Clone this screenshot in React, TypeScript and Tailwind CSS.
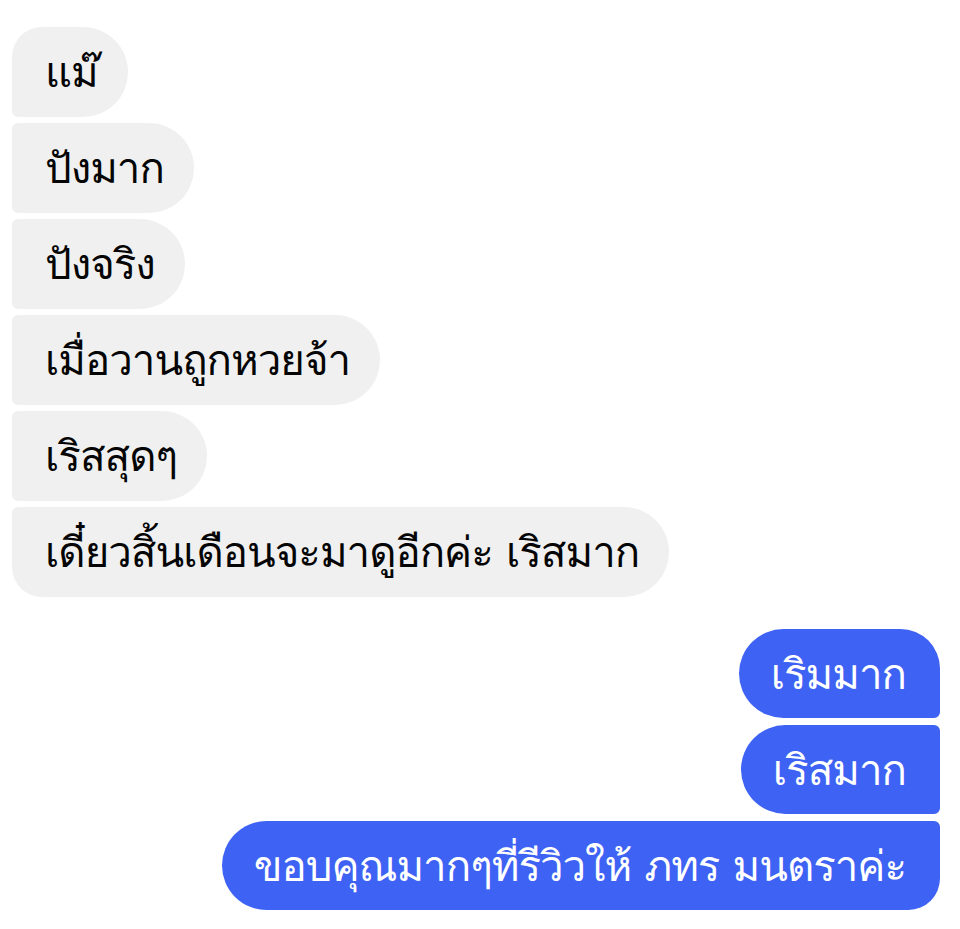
import React from "react";

type Msg = { text: string; corners: string };

const incoming: Msg[] = [
  { text: "แม๊", corners: "rounded-tl-[30px] rounded-bl-[6px] rounded-r-[45px]" },
  { text: "ปังมาก", corners: "rounded-l-[6px] rounded-r-[45px]" },
  { text: "ปังจริง", corners: "rounded-l-[6px] rounded-r-[45px]" },
  { text: "เมื่อวานถูกหวยจ้า", corners: "rounded-l-[6px] rounded-r-[45px]" },
  { text: "เริสสุดๆ", corners: "rounded-l-[6px] rounded-r-[45px]" },
  {
    text: "เดี๋ยวสิ้นเดือนจะมาดูอีกค่ะ เริสมาก",
    corners: "rounded-tl-[6px] rounded-bl-[30px] rounded-r-[45px]",
  },
];

const outgoing: Msg[] = [
  { text: "เริมมาก", corners: "rounded-l-[45px] rounded-tr-[40px] rounded-br-[6px]" },
  { text: "เริสมาก", corners: "rounded-l-[45px] rounded-r-[6px]" },
  { text: "ขอบคุณมากๆที่รีวิวให้ ภทร มนตราค่ะ", corners: "rounded-l-[45px] rounded-tr-[6px] rounded-br-[32px]" },
];

const font = {
  fontFamily: 'Loma, "Noto Sans Thai", "Liberation Sans", sans-serif',
};

export default function App() {
  return (
    <div className="w-[960px] h-[929px] bg-white overflow-hidden" style={font}>
      <div className="flex flex-col items-start gap-[6px] pt-[27px] pl-[12px]">
        {incoming.map((m, i) => (
          <div
            key={i}
            className={`h-[90px] flex items-center pl-[33px] pr-[30px] bg-[#f0f0f0] text-[#050505] text-[42px] tracking-[-1px] leading-none whitespace-nowrap ${m.corners}`}
          >
            {m.text}
          </div>
        ))}
      </div>
      <div className="flex flex-col items-end gap-[7px] mt-[32px] pr-[20px]">
        {outgoing.map((m, i) => (
          <div
            key={i}
            className={`h-[89px] flex items-center pl-[32px] pr-[34px] bg-[#3e62f4] text-white text-[42px] tracking-[-1px] leading-none whitespace-nowrap ${m.corners}`}
          >
            {m.text}
          </div>
        ))}
      </div>
    </div>
  );
}
